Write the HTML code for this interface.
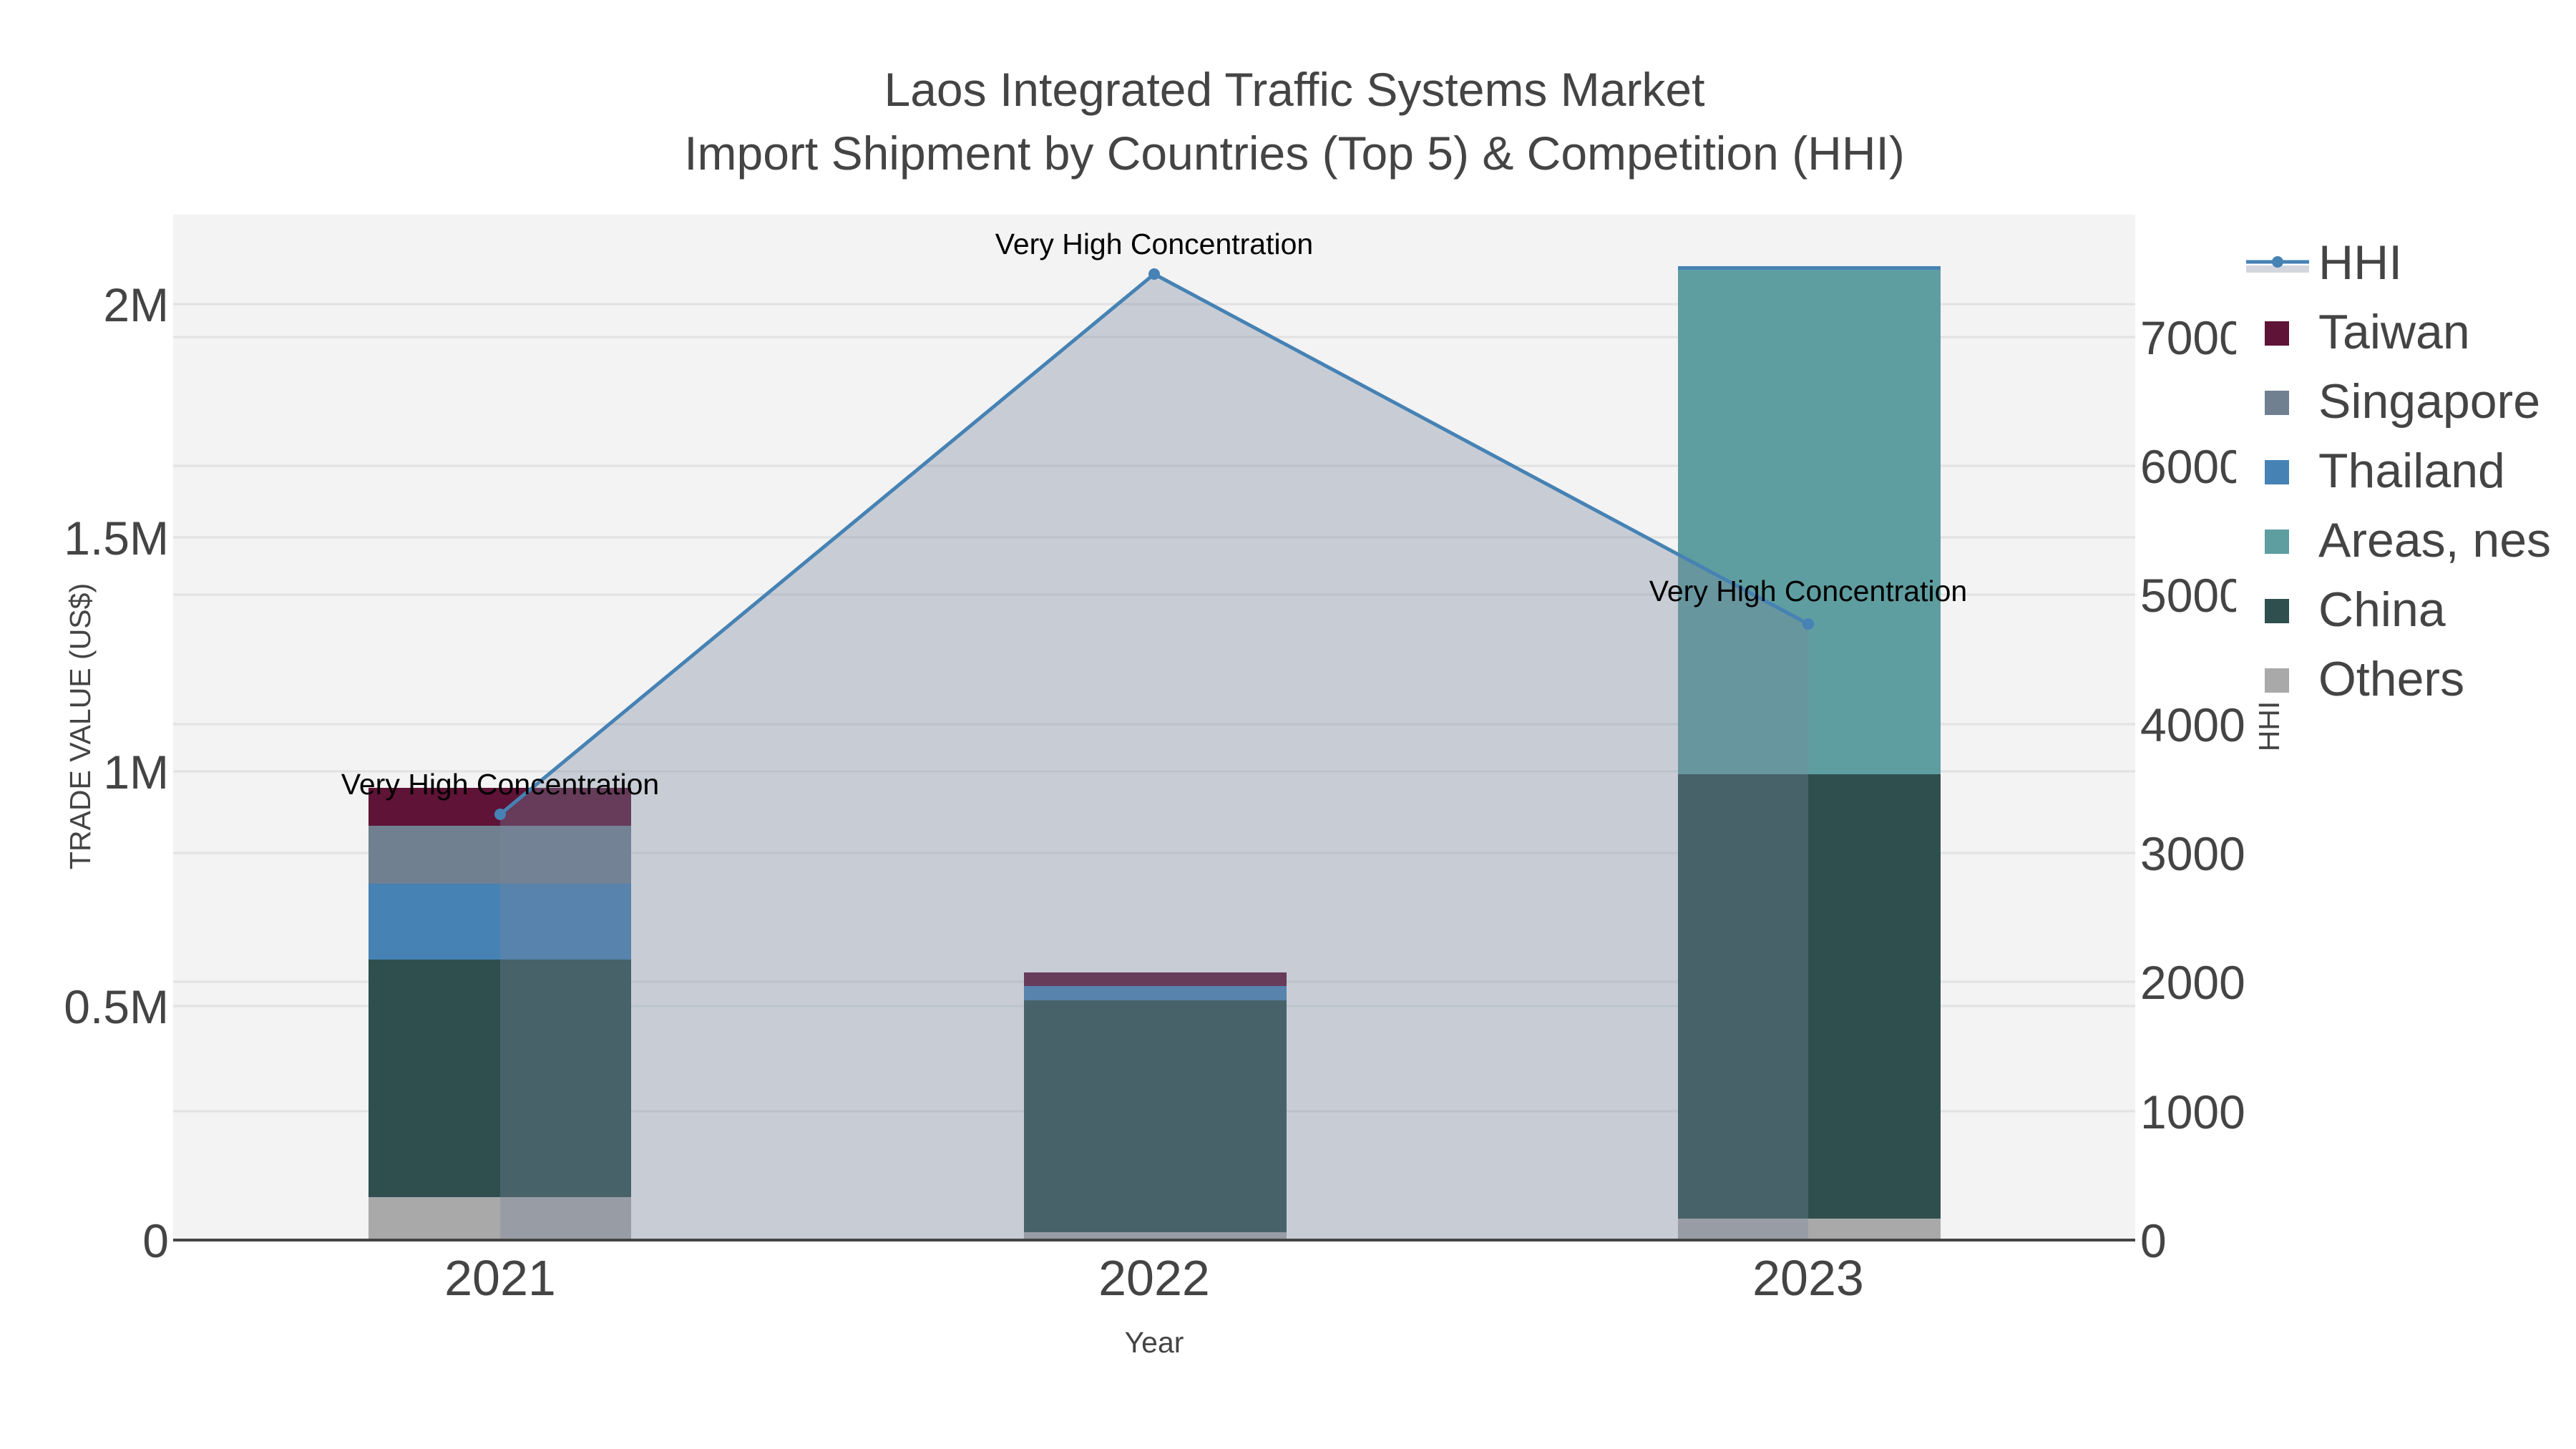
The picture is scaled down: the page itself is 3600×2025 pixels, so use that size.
<!DOCTYPE html>
<html><head><meta charset="utf-8"><style>
html,body{margin:0;padding:0;background:#fff;}
svg{display:block;}
text{font-family:"Liberation Sans",sans-serif;}
</style></head><body>
<svg width="3600" height="2025" viewBox="0 0 3600 2025" xmlns="http://www.w3.org/2000/svg">
<rect width="3600" height="2025" fill="#fff"/>
<rect x="242" y="300" width="2742" height="1433" fill="#f3f3f3"/>
<g stroke="#e2e2e2" stroke-width="3">
<line x1="242" x2="2984" y1="1406" y2="1406"/><line x1="242" x2="2984" y1="1078" y2="1078"/>
<line x1="242" x2="2984" y1="751" y2="751"/><line x1="242" x2="2984" y1="425" y2="425"/>
<line x1="242" x2="2984" y1="1553" y2="1553"/><line x1="242" x2="2984" y1="1372" y2="1372"/>
<line x1="242" x2="2984" y1="1192" y2="1192"/><line x1="242" x2="2984" y1="1012" y2="1012"/>
<line x1="242" x2="2984" y1="831" y2="831"/><line x1="242" x2="2984" y1="651" y2="651"/>
<line x1="242" x2="2984" y1="471" y2="471"/>
</g>
<rect x="515" y="1673" width="367" height="60" fill="#a9a9a9"/>
<rect x="515" y="1341" width="367" height="332" fill="#2f4f4f"/>
<rect x="515" y="1235" width="367" height="106" fill="#4682b4"/>
<rect x="515" y="1154" width="367" height="81" fill="#708090"/>
<rect x="515" y="1101" width="367" height="53" fill="#5f1336"/>
<rect x="1431" y="1722" width="367" height="11" fill="#a9a9a9"/>
<rect x="1431" y="1398" width="367" height="324" fill="#2f4f4f"/>
<rect x="1431" y="1378" width="367" height="20" fill="#4682b4"/>
<rect x="1431" y="1359" width="367" height="19" fill="#5f1336"/>
<rect x="2345" y="1703" width="367" height="30" fill="#a9a9a9"/>
<rect x="2345" y="1082" width="367" height="621" fill="#2f4f4f"/>
<rect x="2345" y="376" width="367" height="706" fill="#5f9ea0"/>
<rect x="2345" y="372" width="367" height="5" fill="#4682b4"/>
<polygon points="699,1733 699,1138 1613,383 2527,872 2527,1733" fill="rgb(120,134,157)" fill-opacity="0.35"/>
<polyline points="699,1138 1613,383 2527,872" fill="none" stroke="#4682b4" stroke-width="5"/>
<circle cx="699" cy="1138" r="8" fill="#4682b4"/><circle cx="1613" cy="383" r="8" fill="#4682b4"/><circle cx="2527" cy="872" r="8" fill="#4682b4"/>
<line x1="242" x2="2984" y1="1733" y2="1733" stroke="#444" stroke-width="4"/>
<g font-size="41" fill="#000" text-anchor="middle">
<text x="699" y="1110">Very High Concentration</text>
<text x="1613" y="355">Very High Concentration</text>
<text x="2527" y="840">Very High Concentration</text>
</g>
<g fill="#444" text-anchor="middle" font-size="66">
<text x="1809" y="148">Laos Integrated Traffic Systems Market</text>
<text x="1809" y="237">Import Shipment by Countries (Top 5) &amp; Competition (HHI)</text>
</g>
<g fill="#444" font-size="66" text-anchor="end">
<text x="236" y="1757">0</text><text x="236" y="1430">0.5M</text><text x="236" y="1102">1M</text>
<text x="236" y="775">1.5M</text><text x="236" y="449">2M</text>
</g>
<g fill="#444" font-size="70" text-anchor="middle">
<text x="699" y="1810">2021</text><text x="1613" y="1810">2022</text><text x="2527" y="1810">2023</text>
</g>
<text x="1613" y="1890" fill="#444" font-size="41" text-anchor="middle">Year</text>
<text transform="translate(126,1015) rotate(-90)" fill="#444" font-size="41" text-anchor="middle">TRADE VALUE (US$)</text>
<g fill="#444" font-size="66">
<text x="2991" y="1757">0</text><text x="2991" y="1577">1000</text><text x="2991" y="1396">2000</text>
<text x="2991" y="1216">3000</text><text x="2991" y="1036">4000</text><text x="2991" y="855">5000</text>
<text x="2991" y="675">6000</text><text x="2991" y="495">7000</text>
</g>
<rect x="3125" y="320" width="475" height="660" fill="#fff"/>
<text transform="translate(3185,1015) rotate(-90)" fill="#444" font-size="41" text-anchor="middle">HHI</text>
<rect x="3139" y="371" width="88" height="10" fill="#d3d6dc"/>
<line x1="3139" x2="3227" y1="366" y2="366" stroke="#4682b4" stroke-width="5"/>
<circle cx="3183" cy="366" r="8" fill="#4682b4"/>
<rect x="3165" y="449" width="34" height="34" fill="#5f1336"/>
<rect x="3165" y="546" width="34" height="34" fill="#708090"/>
<rect x="3165" y="643" width="34" height="34" fill="#4682b4"/>
<rect x="3165" y="740" width="34" height="34" fill="#5f9ea0"/>
<rect x="3165" y="837" width="34" height="34" fill="#2f4f4f"/>
<rect x="3165" y="934" width="34" height="34" fill="#a9a9a9"/>
<g fill="#444" font-size="68">
<text x="3240" y="390">HHI</text><text x="3240" y="487">Taiwan</text><text x="3240" y="584">Singapore</text>
<text x="3240" y="681">Thailand</text><text x="3240" y="778">Areas, nes</text><text x="3240" y="875">China</text>
<text x="3240" y="972">Others</text>
</g>
</svg>
</body></html>
